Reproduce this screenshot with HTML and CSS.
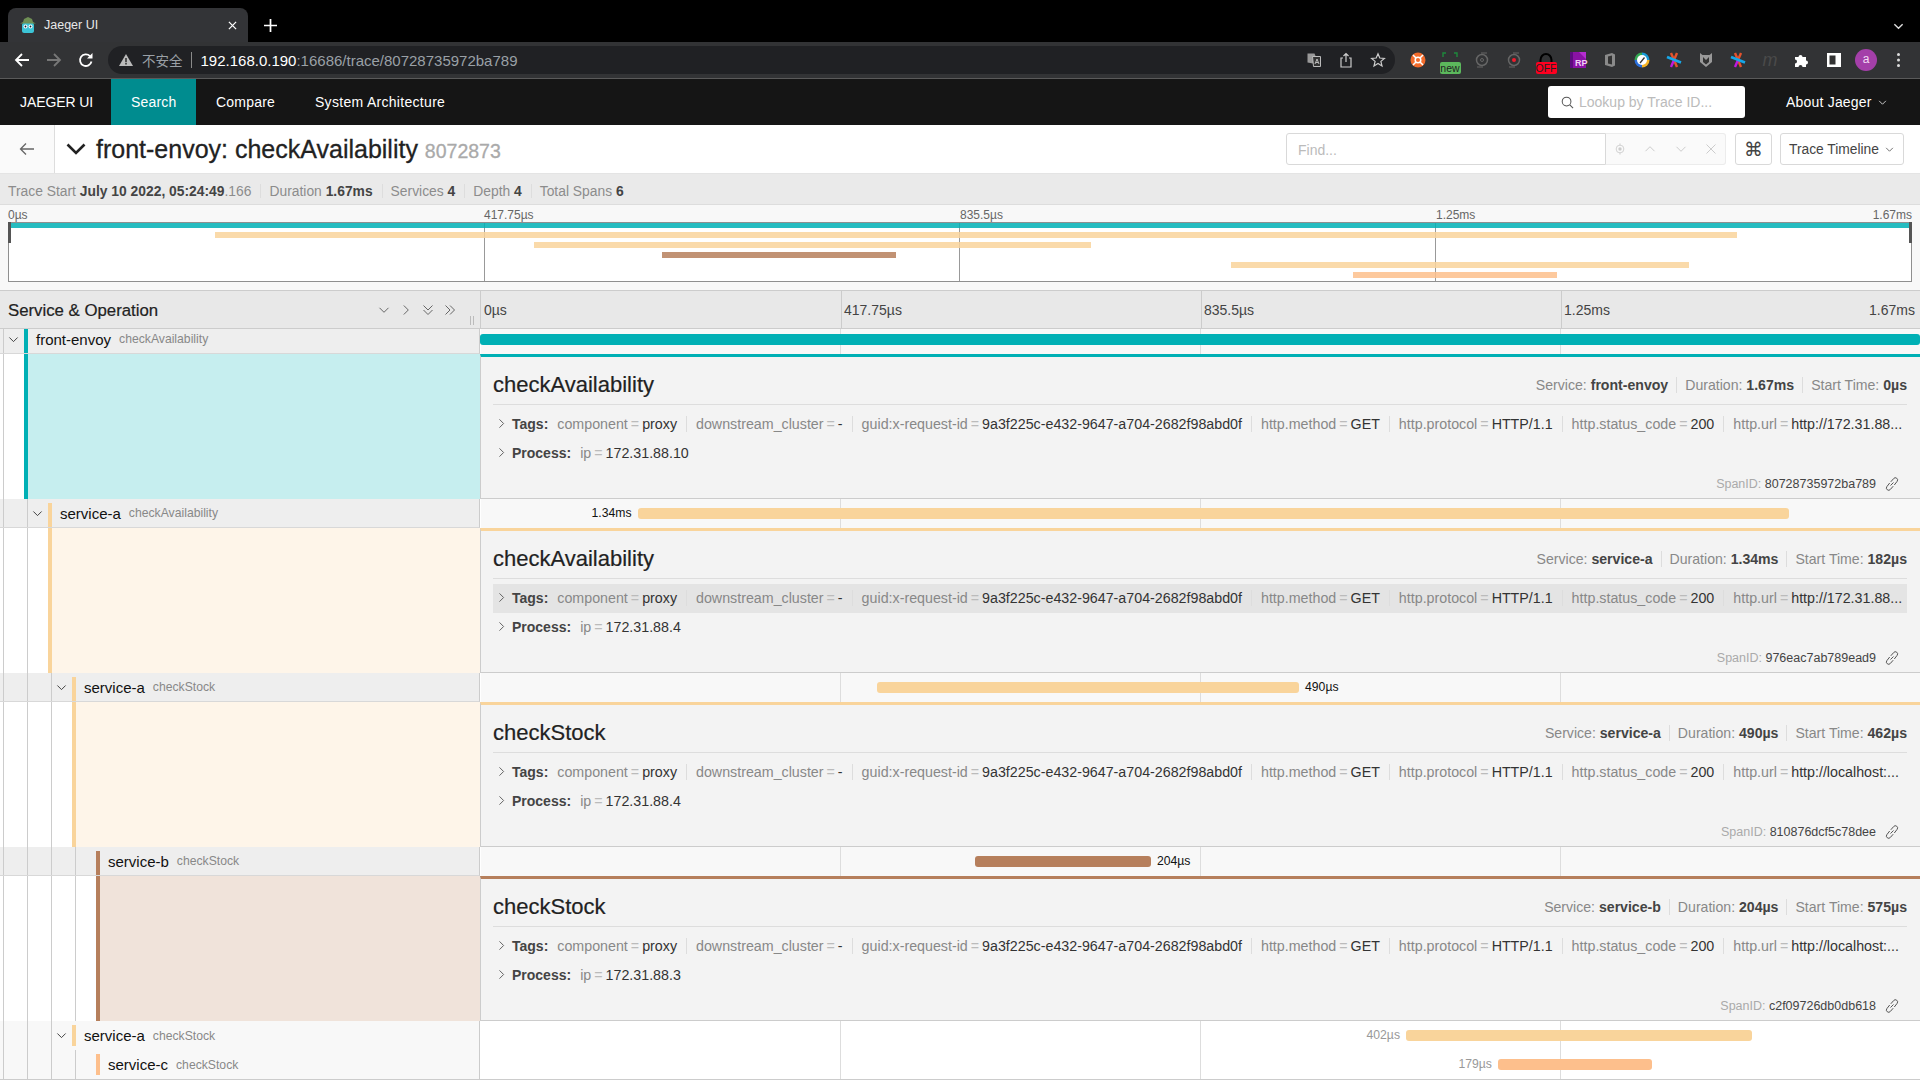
FILE: index.html
```html
<!DOCTYPE html>
<html lang="en">
<head>
    <meta charset="UTF-8">
    <title>Jaeger UI</title>
    <link rel="stylesheet" href="styles.css">
</head>
<body>
    <svg class="sprites" aria-hidden="true">
        <symbol id="i-down" viewBox="0 0 12 12"><path d="M1.5 3.8 6 8.3l4.500-4.500" fill="none" stroke="currentColor" stroke-width="1"/></symbol>
        <symbol id="i-right" viewBox="0 0 12 12"><path d="M3.800 1.500 8.300 6l-4.500 4.500" fill="none" stroke="currentColor" stroke-width="1"/></symbol>
        <symbol id="i-up" viewBox="0 0 12 12"><path d="M1.500 8.200 6 3.700l4.500 4.500" fill="none" stroke="currentColor" stroke-width="1"/></symbol>
        <symbol id="i-link" viewBox="0 0 16 16"><path d="M6.500 9.500 9.500 6.500M6.800 5.800 9.600 2.600a2.200 2.200 0 0 1 3.500 2.800L10.300 9M9.200 10.200 6.400 13.400a2.200 2.200 0 0 1-3.500-2.800L5.700 7" fill="none" stroke="currentColor" stroke-width="1"/></symbol>
        <symbol id="i-asterisk" viewBox="0 0 16 16"><path d="M5 1l3 7M11 1 8 8" fill="none" stroke="#e5532d" stroke-width="2.400"/><path d="M8 8l3 7" fill="none" stroke="#e5532d" stroke-width="2.400"/><path d="M8 8l-3 7" fill="none" stroke="#c019e0" stroke-width="2.400"/><path d="M1 5l14 5.500" stroke="#17a7e8" stroke-width="2.800"/></symbol>
    </svg>

    <div class="tabstrip">
        <div class="tab">
            <svg class="favicon" viewBox="0 0 16 16">
                <path d="M2 8c0-2 2-3 6-3s6 1 6 3v6c0 1-1 2-2 2H4c-1 0-2-1-2-2z" fill="#3cc4d6"/>
                <path d="M0 6.500 3 5l1-3 4-2 4 2 1 3 3 1.500z" fill="#6f8f55"/>
                <circle cx="5.500" cy="9.500" r="2" fill="#fff"/><circle cx="10.500" cy="9.500" r="2" fill="#fff"/>
                <circle cx="5.500" cy="9.500" r=".9" fill="#123"/><circle cx="10.500" cy="9.500" r=".9" fill="#123"/>
            </svg>
            <span class="tab-title">Jaeger UI</span>
            <svg class="tab-close" viewBox="0 0 10 10"><path d="M1 1l8 8M9 1 1 9" stroke="#fff" stroke-width="1.400"/></svg>
        </div>
        <svg class="tab-new" viewBox="0 0 12 12"><path d="M6 0v12M0 6h12" stroke="#fff" stroke-width="1.600"/></svg>
        <svg class="tab-menu" viewBox="0 0 12 12"><path d="M1.500 3.500 6 8l4.500-4.500" fill="none" stroke="#ddd" stroke-width="1.500"/></svg>
    </div>

    <div class="toolbar">
        <div class="tool-btn"><svg viewBox="0 0 16 16"><path d="M15 8H2M8 2 2 8l6 6" fill="none" stroke="#fff" stroke-width="1.800"/></svg></div>
        <div class="tool-btn"><svg viewBox="0 0 16 16"><path d="M1 8h13M8 2l6 6-6 6" fill="none" stroke="#777" stroke-width="1.800"/></svg></div>
        <div class="tool-btn"><svg viewBox="0 0 16 16"><path d="M13.500 9.500A5.800 5.800 0 1 1 12 4.100" fill="none" stroke="#fff" stroke-width="1.800"/><path d="M14.500 1v5.500H9z" fill="#fff"/></svg></div>
        <div class="omnibox">
            <svg class="omni-warn" viewBox="0 0 14 14"><path d="M7 1 14 13H0z" fill="#bbb"/><path d="M6.300 5h1.400v4.300H6.300zM6.300 10h1.400v1.400H6.300z" fill="#222"/></svg>
            <span class="omni-unsafe">不安全</span>
            <span class="omni-url"><b>192.168.0.190</b>:16686/trace/80728735972ba789</span>
            <div class="omni-actions">
                <svg viewBox="0 0 16 16"><path d="M1.500 1.500h7l1 2.500v8l-8-1.500z" fill="#999"/><path d="M6.500 4.500h8v10h-7z" fill="#333" stroke="#bbb"/><path d="M9 12l2-5 2 5M9.800 10.500h2.400" fill="none" stroke="#bbb"/></svg>
                <svg viewBox="0 0 16 16"><path d="M5 6H3v9h10V6h-2M8 10V1.500M5.500 4 8 1.500 10.500 4" fill="none" stroke="#ccc" stroke-width="1.200"/></svg>
                <svg viewBox="0 0 16 16"><path d="M8 1.800 9.800 6l4.600.4-3.500 3 1.100 4.500L8 11.500l-4 2.400 1.100-4.500-3.500-3L6.200 6z" fill="none" stroke="#ccc" stroke-width="1.200"/></svg>
            </div>
        </div>
        <div class="extensions">
            <div class="ext"><svg viewBox="0 0 16 16"><circle cx="8" cy="8" r="7.500" fill="#f26b2b"/><circle cx="8" cy="8" r="2.800" fill="none" stroke="#fff" stroke-width="1.500"/><path d="M3 3l3 3M13 3l-3 3M3 13l3-3M13 13l-3-3" stroke="#fff" stroke-width="1.500"/></svg></div>
            <div class="ext ext-badge">
                <svg class="mark-new" viewBox="0 0 16 5"><path d="M1 5V1h3M15 5V1h-3" fill="none" stroke="#1e8a3c" stroke-width="1.400"/></svg>
                <span class="badge badge-new">new</span>
            </div>
            <div class="ext"><svg viewBox="0 0 16 16"><circle cx="8" cy="8" r="5.500" fill="none" stroke="#666" stroke-width="1.500"/><circle cx="8" cy="8" r="1.500" fill="none" stroke="#666"/><path d="M3 15h6M7 1h6" stroke="#666"/></svg></div>
            <div class="ext"><svg viewBox="0 0 16 16"><circle cx="8" cy="8" r="5.500" fill="none" stroke="#666" stroke-width="1.500"/><circle cx="8" cy="8" r="2" fill="#f01c2c"/><path d="M3 15h6M7 1h6" stroke="#666"/></svg></div>
            <div class="ext ext-badge">
                <svg class="mark-off" viewBox="0 0 16 9"><path d="M2.500 9V7a5.500 6 0 0 1 11 0v2" fill="none" stroke="#000" stroke-width="2"/></svg>
                <span class="badge badge-off">OFF</span>
            </div>
            <div class="ext"><svg viewBox="0 0 16 16"><path d="M0 0h16v16H0z" fill="#8a12a5"/><path d="M4 0h5l7 7V0z" fill="#b52dd0"/><path d="M0 0h3v16H0z" fill="#5d0c80"/></svg><span class="ext-rp">RP</span></div>
            <div class="ext"><svg viewBox="0 0 16 16"><path d="M3 3 10 1l3 1.500v11L10 15l-7-2z" fill="#8a8a8a"/><path d="M6 4.500 10 3.500v9L6 11.500z" fill="#333"/></svg></div>
            <div class="ext"><svg viewBox="0 0 16 16"><path d="M8 .5A7.500 7.500 0 0 0 .5 8H8z" fill="#34a853"/><path d="M8 .5A7.500 7.500 0 0 1 15.500 8H8z" fill="#1a9ad6"/><path d="M15.500 8A7.500 7.500 0 0 1 8 15.500V8z" fill="#f6b324"/><path d="M.5 8A7.500 7.500 0 0 0 8 15.500V8z" fill="#2a6fdb"/><circle cx="8" cy="8" r="5" fill="#fff"/><path d="M5.500 10.500 10 5l1 1-4.500 5.500z" fill="#333"/></svg></div>
            <div class="ext"><svg><use href="#i-asterisk"/></svg></div>
            <div class="ext"><svg viewBox="0 0 16 16"><path d="M2 1l2.500 2h7L14 1v9l-6 5-6-5z" fill="#999"/><path d="M5 5l3 3 3-3v5l-3 2.500L5 10z" fill="#333"/></svg></div>
            <div class="ext"><svg><use href="#i-asterisk"/></svg></div>
            <div class="ext"><span class="ext-m">m</span></div>
            <div class="ext"><svg viewBox="0 0 16 16"><path d="M1 5h3.500a2 2 0 1 1 4 0H12v3.500a2 2 0 1 1 0 4V15H8.500a2 2 0 1 0-4 0H1v-3.500a2 2 0 1 0 0-4z" fill="#fff"/></svg></div>
            <div class="ext"><svg viewBox="0 0 16 16"><path d="M1 1h14v14H1z" fill="#fff"/><path d="M3.500 3.500h6v9h-6z" fill="#333"/></svg></div>
            <div class="ext"><span class="avatar">a</span></div>
            <div class="ext"><svg viewBox="0 0 4 16"><circle cx="2" cy="2.500" r="1.500" fill="#ddd"/><circle cx="2" cy="8" r="1.500" fill="#ddd"/><circle cx="2" cy="13.500" r="1.500" fill="#ddd"/></svg></div>
        </div>
    </div>

    <nav class="topnav">
        <a class="nav-item">JAEGER UI</a>
        <a class="nav-item active">Search</a>
        <a class="nav-item">Compare</a>
        <a class="nav-item">System Architecture</a>
        <div class="lookup">
            <svg viewBox="0 0 14 14"><circle cx="6" cy="6" r="4.700" fill="none" stroke="#555" stroke-width="1.100"/><path d="M9.500 9.500 13 13" stroke="#555" stroke-width="1.100"/></svg>
            <span>Lookup by Trace ID...</span>
        </div>
        <div class="about">About Jaeger <svg class="caret"><use href="#i-down"/></svg></div>
    </nav>

    <header class="trace-head">
        <div class="back"><svg viewBox="0 0 16 16"><path d="M15 8H1.500M7 2.500 1.500 8 7 13.500" fill="none" stroke="#666" stroke-width="1.300"/></svg></div>
        <svg class="title-chevron" viewBox="0 0 20 12"><path d="M1.500 1.500 10 10l8.500-8.500" fill="none" stroke="#222" stroke-width="2.600"/></svg>
        <h1 class="trace-title">front-envoy: checkAvailability <small>8072873</small></h1>
        <div class="find">
            <div class="find-input">Find...</div>
            <div class="find-actions">
                <svg viewBox="0 0 14 14"><circle cx="7" cy="7" r="4.500" fill="none" stroke="#ccc"/><circle cx="7" cy="7" r="2" fill="#ccc"/><path d="M7 .5v2M7 11.500v2" stroke="#ccc"/></svg>
                <svg viewBox="0 0 12 12"><use href="#i-up"/></svg>
                <svg viewBox="0 0 12 12"><use href="#i-down"/></svg>
                <svg viewBox="0 0 12 12"><path d="M1.500 1.500l9 9M10.500 1.500l-9 9" stroke="currentColor"/></svg>
            </div>
        </div>
        <div class="head-btn kbd">⌘</div>
        <div class="head-btn view-btn">Trace Timeline <svg class="caret"><use href="#i-down"/></svg></div>
    </header>

    <div class="summary">
        <span class="sum-item">Trace Start <b>July 10 2022, 05:24:49</b>.166</span>
        <span class="sum-item">Duration <b>1.67ms</b></span>
        <span class="sum-item">Services <b>4</b></span>
        <span class="sum-item">Depth <b>4</b></span>
        <span class="sum-item">Total Spans <b>6</b></span>
    </div>

    <section class="minimap">
        <div class="mini-ticks">
            <span>0µs</span>
            <span>417.75µs</span>
            <span>835.5µs</span>
            <span class="mini-last"><span>1.25ms</span><span>1.67ms</span></span>
        </div>
        <div class="mini-box">
            <div class="mini-bar c-teal" style="margin-left:0;width:100%"></div>
            <div class="mini-bar c-tan" style="margin-left:10.82%;width:80.03%"></div>
            <div class="mini-bar c-tan" style="margin-left:27.59%;width:29.32%"></div>
            <div class="mini-bar c-brown" style="margin-left:34.31%;width:12.3%"></div>
            <div class="mini-bar c-tan" style="margin-left:64.27%;width:24.07%"></div>
            <div class="mini-bar c-peach" style="margin-left:70.65%;width:10.75%"></div>
        </div>
    </section>

    <section class="timeline">
        <div class="tl-head">
            <div class="tl-head-name">
                <span class="tl-title">Service &amp; Operation</span>
                <div class="tl-tools">
                    <svg><use href="#i-down"/></svg>
                    <svg><use href="#i-right"/></svg>
                    <svg viewBox="0 0 12 12"><path d="M1.500 1.500 6 6l4.500-4.500M1.500 6 6 10.500 10.500 6" fill="none" stroke="currentColor"/></svg>
                    <svg viewBox="0 0 12 12"><path d="M1.500 1.500 6 6l-4.500 4.500M6 1.500 10.500 6 6 10.500" fill="none" stroke="currentColor"/></svg>
                </div>
                <span class="grip"></span>
            </div>
            <div class="tl-head-ticks">
                <span>0µs</span>
                <span>417.75µs</span>
                <span>835.5µs</span>
                <span class="tl-last"><span>1.25ms</span><span>1.67ms</span></span>
            </div>
        </div>

        <!-- front-envoy -->
        <div class="row row-first selected">
            <div class="row-name">
                <span class="guide"><svg class="toggle"><use href="#i-down"/></svg></span>
                <span class="svc-mark open c-teal"></span>
                <span class="svc">front-envoy</span><span class="op">checkAvailability</span>
            </div>
            <div class="row-track"><span class="bar c-teal" style="left:-0.07%;width:100.07%"></span></div>
        </div>
        <div class="detail">
            <div class="detail-name">
                <span class="guide"></span>
                <span class="detail-tint tint-teal"></span>
            </div>
            <div class="detail-body line-teal">
                <div class="detail-top">
                    <h2>checkAvailability</h2>
                    <div class="overview">
                        <span>Service: <b>front-envoy</b></span>
                        <span>Duration: <b>1.67ms</b></span>
                        <span>Start Time: <b>0µs</b></span>
                    </div>
                </div>
                <div class="kv-row">
                    <svg class="kv-toggle"><use href="#i-right"/></svg>
                    <b class="kv-label">Tags:</b>
                    <span class="kv"><i>component</i><em>=</em>proxy</span>
                    <span class="kv"><i>downstream_cluster</i><em>=</em>-</span>
                    <span class="kv"><i>guid:x-request-id</i><em>=</em>9a3f225c-e432-9647-a704-2682f98abd0f</span>
                    <span class="kv"><i>http.method</i><em>=</em>GET</span>
                    <span class="kv"><i>http.protocol</i><em>=</em>HTTP/1.1</span>
                    <span class="kv"><i>http.status_code</i><em>=</em>200</span>
                    <span class="kv"><i>http.url</i><em>=</em>http://172.31.88...</span>
                </div>
                <div class="kv-row">
                    <svg class="kv-toggle"><use href="#i-right"/></svg>
                    <b class="kv-label">Process:</b>
                    <span class="kv"><i>ip</i><em>=</em>172.31.88.10</span>
                </div>
                <div class="span-id">SpanID: <span>80728735972ba789</span><svg><use href="#i-link"/></svg></div>
            </div>
        </div>

        <!-- service-a checkAvailability -->
        <div class="row selected">
            <div class="row-name">
                <span class="guide"></span>
                <span class="guide"><svg class="toggle"><use href="#i-down"/></svg></span>
                <span class="svc-mark open c-tan"></span>
                <span class="svc">service-a</span><span class="op">checkAvailability</span>
            </div>
            <div class="row-track"><span class="bar c-tan" style="left:10.88%;width:80.02%"><span class="bar-label left">1.34ms</span></span></div>
        </div>
        <div class="detail">
            <div class="detail-name">
                <span class="guide"></span><span class="guide"></span>
                <span class="detail-tint tint-tan"></span>
            </div>
            <div class="detail-body line-tan">
                <div class="detail-top">
                    <h2>checkAvailability</h2>
                    <div class="overview">
                        <span>Service: <b>service-a</b></span>
                        <span>Duration: <b>1.34ms</b></span>
                        <span>Start Time: <b>182µs</b></span>
                    </div>
                </div>
                <div class="kv-row hovered">
                    <svg class="kv-toggle"><use href="#i-right"/></svg>
                    <b class="kv-label">Tags:</b>
                    <span class="kv"><i>component</i><em>=</em>proxy</span>
                    <span class="kv"><i>downstream_cluster</i><em>=</em>-</span>
                    <span class="kv"><i>guid:x-request-id</i><em>=</em>9a3f225c-e432-9647-a704-2682f98abd0f</span>
                    <span class="kv"><i>http.method</i><em>=</em>GET</span>
                    <span class="kv"><i>http.protocol</i><em>=</em>HTTP/1.1</span>
                    <span class="kv"><i>http.status_code</i><em>=</em>200</span>
                    <span class="kv"><i>http.url</i><em>=</em>http://172.31.88...</span>
                </div>
                <div class="kv-row">
                    <svg class="kv-toggle"><use href="#i-right"/></svg>
                    <b class="kv-label">Process:</b>
                    <span class="kv"><i>ip</i><em>=</em>172.31.88.4</span>
                </div>
                <div class="span-id">SpanID: <span>976eac7ab789ead9</span><svg><use href="#i-link"/></svg></div>
            </div>
        </div>

        <!-- service-a checkStock -->
        <div class="row selected">
            <div class="row-name">
                <span class="guide"></span>
                <span class="guide"></span>
                <span class="guide"><svg class="toggle"><use href="#i-down"/></svg></span>
                <span class="svc-mark open c-tan"></span>
                <span class="svc">service-a</span><span class="op">checkStock</span>
            </div>
            <div class="row-track"><span class="bar c-tan" style="left:27.52%;width:29.33%"><span class="bar-label right">490µs</span></span></div>
        </div>
        <div class="detail">
            <div class="detail-name">
                <span class="guide"></span><span class="guide"></span><span class="guide"></span>
                <span class="detail-tint tint-tan"></span>
            </div>
            <div class="detail-body line-tan">
                <div class="detail-top">
                    <h2>checkStock</h2>
                    <div class="overview">
                        <span>Service: <b>service-a</b></span>
                        <span>Duration: <b>490µs</b></span>
                        <span>Start Time: <b>462µs</b></span>
                    </div>
                </div>
                <div class="kv-row">
                    <svg class="kv-toggle"><use href="#i-right"/></svg>
                    <b class="kv-label">Tags:</b>
                    <span class="kv"><i>component</i><em>=</em>proxy</span>
                    <span class="kv"><i>downstream_cluster</i><em>=</em>-</span>
                    <span class="kv"><i>guid:x-request-id</i><em>=</em>9a3f225c-e432-9647-a704-2682f98abd0f</span>
                    <span class="kv"><i>http.method</i><em>=</em>GET</span>
                    <span class="kv"><i>http.protocol</i><em>=</em>HTTP/1.1</span>
                    <span class="kv"><i>http.status_code</i><em>=</em>200</span>
                    <span class="kv"><i>http.url</i><em>=</em>http://localhost:...</span>
                </div>
                <div class="kv-row">
                    <svg class="kv-toggle"><use href="#i-right"/></svg>
                    <b class="kv-label">Process:</b>
                    <span class="kv"><i>ip</i><em>=</em>172.31.88.4</span>
                </div>
                <div class="span-id">SpanID: <span>810876dcf5c78dee</span><svg><use href="#i-link"/></svg></div>
            </div>
        </div>

        <!-- service-b checkStock -->
        <div class="row selected">
            <div class="row-name">
                <span class="guide"></span><span class="guide"></span><span class="guide"></span><span class="guide"></span>
                <span class="svc-mark open c-brown"></span>
                <span class="svc">service-b</span><span class="op">checkStock</span>
            </div>
            <div class="row-track"><span class="bar c-brown" style="left:34.33%;width:12.23%"><span class="bar-label right">204µs</span></span></div>
        </div>
        <div class="detail">
            <div class="detail-name">
                <span class="guide"></span><span class="guide"></span><span class="guide"></span><span class="guide"></span>
                <span class="detail-tint tint-brown"></span>
            </div>
            <div class="detail-body line-brown">
                <div class="detail-top">
                    <h2>checkStock</h2>
                    <div class="overview">
                        <span>Service: <b>service-b</b></span>
                        <span>Duration: <b>204µs</b></span>
                        <span>Start Time: <b>575µs</b></span>
                    </div>
                </div>
                <div class="kv-row">
                    <svg class="kv-toggle"><use href="#i-right"/></svg>
                    <b class="kv-label">Tags:</b>
                    <span class="kv"><i>component</i><em>=</em>proxy</span>
                    <span class="kv"><i>downstream_cluster</i><em>=</em>-</span>
                    <span class="kv"><i>guid:x-request-id</i><em>=</em>9a3f225c-e432-9647-a704-2682f98abd0f</span>
                    <span class="kv"><i>http.method</i><em>=</em>GET</span>
                    <span class="kv"><i>http.protocol</i><em>=</em>HTTP/1.1</span>
                    <span class="kv"><i>http.status_code</i><em>=</em>200</span>
                    <span class="kv"><i>http.url</i><em>=</em>http://localhost:...</span>
                </div>
                <div class="kv-row">
                    <svg class="kv-toggle"><use href="#i-right"/></svg>
                    <b class="kv-label">Process:</b>
                    <span class="kv"><i>ip</i><em>=</em>172.31.88.3</span>
                </div>
                <div class="span-id">SpanID: <span>c2f09726db0db618</span><svg><use href="#i-link"/></svg></div>
            </div>
        </div>

        <!-- collapsed spans -->
        <div class="row plain">
            <div class="row-name">
                <span class="guide"></span>
                <span class="guide"></span>
                <span class="guide"><svg class="toggle"><use href="#i-down"/></svg></span>
                <span class="svc-mark c-tan"></span>
                <span class="svc">service-a</span><span class="op">checkStock</span>
            </div>
            <div class="row-track"><span class="bar c-tan" style="left:64.28%;width:24.07%"><span class="bar-label left muted">402µs</span></span></div>
        </div>
        <div class="row plain">
            <div class="row-name">
                <span class="guide"></span><span class="guide"></span><span class="guide"></span><span class="guide"></span>
                <span class="svc-mark c-peach"></span>
                <span class="svc">service-c</span><span class="op">checkStock</span>
            </div>
            <div class="row-track"><span class="bar c-peach" style="left:70.67%;width:10.7%"><span class="bar-label left muted">179µs</span></span></div>
        </div>
    </section>
</body>
</html>
```

FILE: styles.css
```css
* {
    box-sizing: border-box;
}

body {
    margin: 0;
    width: 1920px;
    height: 1080px;
    overflow: hidden;
    background: #fff;
    color: #333;
    font-family: "Liberation Sans", Arial, sans-serif;
    font-size: 14px;
}

.sprites {
    display: none;
}

/* browser chrome */
.tabstrip {
    height: 42px;
    background: #000;
    display: flex;
    align-items: flex-end;
    padding-left: 8px;
    position: relative;
}

.tab {
    width: 240px;
    height: 34px;
    background: #333437;
    border-radius: 8px 8px 0 0;
    display: flex;
    align-items: center;
    padding-left: 12px;
    padding-right: 11px;
    color: #e8e8e8;
    font-size: 12.500px;
}

.favicon {
    width: 16px;
    height: 16px;
    margin-right: 8px;
    flex: none;
}

.tab-title {
    flex: 1;
}

.tab-close {
    width: 9px;
    height: 9px;
}

.tab-new {
    width: 13px;
    height: 13px;
    margin: 0 0 10px 16px;
}

.tab-menu {
    width: 11px;
    height: 11px;
    margin: 0 16px 10px auto;
}

.toolbar {
    height: 37px;
    background: #323335;
    border-bottom: 1px solid #5a5a5a;
    display: flex;
    align-items: center;
    padding: 0 6px;
}

.tool-btn {
    width: 32px;
    display: flex;
    justify-content: center;
}

.tool-btn svg {
    width: 16px;
    height: 16px;
}

.omnibox {
    width: 1287px;
    height: 28px;
    margin-left: 6px;
    border-radius: 14px;
    background: #202124;
    display: flex;
    align-items: center;
    padding-left: 11px;
    padding-right: 9px;
    color: #9aa0a6;
    font-size: 15px;
}

.omni-warn {
    width: 14px;
    height: 14px;
}

.omni-unsafe {
    margin-left: 9px;
    padding-right: 8px;
    margin-right: 9px;
    border-right: 1px solid #8a8a8a;
    font-family: "Noto Sans CJK SC", sans-serif;
    font-size: 13.500px;
    line-height: 16px;
}

.omni-url b {
    color: #fff;
    font-weight: 400;
}

.omni-actions {
    margin-left: auto;
    display: flex;
    gap: 16px;
}

.omni-actions svg {
    width: 16px;
    height: 16px;
}

.extensions {
    display: flex;
    margin-left: 7px;
}

.ext {
    width: 32px;
    height: 28px;
    display: flex;
    align-items: center;
    justify-content: center;
    position: relative;
}

.ext svg {
    width: 16px;
    height: 16px;
}

.ext-badge {
    flex-direction: column;
    justify-content: flex-end;
}

.ext svg.mark-new {
    height: 5px;
    margin-bottom: 5px;
}

.ext svg.mark-off {
    height: 9px;
}

.badge {
    width: 21px;
    height: 12px;
    border-radius: 2px;
    color: #222;
    font-size: 10.500px;
    line-height: 12px;
    text-align: center;
}

.badge-new {
    background: #5cb85c;
}

.badge-off {
    background: #ff0020;
}

.ext-rp {
    position: absolute;
    left: 13px;
    top: 12px;
    color: #f0d0f5;
    font-size: 9px;
    font-weight: 700;
}

.ext-m {
    color: #4a4a4a;
    font-size: 18px;
    font-style: italic;
}

.avatar {
    width: 22px;
    height: 22px;
    border-radius: 50%;
    background: #a43fa9;
    color: #f3dcf4;
    font-size: 12px;
    line-height: 21px;
    text-align: center;
}

.ext:last-child svg {
    width: 5px;
}

/* jaeger nav */
.topnav {
    height: 46px;
    background: #151515;
    color: #fff;
    display: flex;
    align-items: stretch;
}

.nav-item {
    padding: 0 20px;
    display: flex;
    align-items: center;
    letter-spacing: .2px;
}

.nav-item:first-child {
    width: 111px;
    white-space: nowrap;
    letter-spacing: -.1px;
}

.nav-item.active {
    width: 85px;
    background: #008c8f;
}

.nav-item:nth-child(4) {
    letter-spacing: .3px;
}

.lookup {
    width: 197px;
    height: 32px;
    margin: 7px 0 0 auto;
    background: #fff;
    border-radius: 3px;
    color: #bbb;
    display: flex;
    align-items: center;
    padding-left: 13px;
}

.lookup svg {
    width: 13px;
    height: 13px;
    margin-right: 5px;
}

.about {
    width: 175px;
    padding-left: 41px;
    display: flex;
    align-items: center;
    letter-spacing: .2px;
}

.caret {
    width: 9px;
    height: 9px;
    margin-left: 6px;
}

/* trace header */
.trace-head {
    height: 49px;
    display: flex;
    align-items: center;
    border-bottom: 1px solid #e4e4e4;
}

.back {
    width: 55px;
    height: 100%;
    background: #fafafa;
    border-right: 1px solid #ddd;
    display: flex;
    align-items: center;
    justify-content: center;
}

.back svg {
    width: 16px;
    height: 16px;
}

.title-chevron {
    width: 20px;
    height: 12px;
    margin-left: 11px;
    margin-right: 10px;
}

.trace-title {
    margin: 0;
    flex: 1;
    color: #222;
    font-size: 25px;
    font-weight: 400;
    -webkit-text-stroke: .3px #222;
}

.trace-title small {
    margin-left: 0;
    color: #aaa;
    font-size: 19.500px;
    -webkit-text-stroke: .3px #aaa;
}

.find {
    width: 440px;
    height: 32px;
    display: flex;
    margin-right: 9px;
}

.find-input {
    width: 320px;
    border: 1px solid #d9d9d9;
    border-radius: 3px 0 0 3px;
    color: #bbb;
    line-height: 32px;
    padding-left: 11px;
}

.find-actions {
    flex: 1;
    background: #fafafa;
    border: 1px solid #ececec;
    border-left: 0;
    border-radius: 0 3px 3px 0;
    color: #ccc;
    display: flex;
    align-items: center;
    justify-content: space-between;
    padding: 0 8px;
}

.find-actions svg {
    width: 12px;
    height: 12px;
}

.head-btn {
    height: 32px;
    border: 1px solid #d9d9d9;
    border-radius: 3px;
    display: flex;
    align-items: center;
    color: #444;
}

.kbd {
    width: 37px;
    justify-content: center;
    margin-right: 8px;
    font-family: "DejaVu Sans", sans-serif;
    font-size: 19px;
}

.view-btn {
    width: 124px;
    padding-left: 8px;
    margin-right: 16px;
    white-space: nowrap;
    font-size: 13.800px;
}

.summary {
    height: 31px;
    background: #eaeaea;
    border-bottom: 1px solid #ddd;
    display: flex;
    align-items: center;
    padding: 3px 0 0 8px;
    color: #8c8c8c;
    font-size: 13.850px;
}

.sum-item {
    padding-right: 9px;
    margin-right: 8px;
    border-right: 1px solid #ddd;
    line-height: 14px;
}

.sum-item:last-child {
    border-right: 0;
}

.sum-item b {
    color: #444;
}

/* minimap */
.minimap {
    height: 85px;
    background: #f8f8f8;
    padding: 0 8px;
}

.mini-ticks {
    height: 17px;
    display: grid;
    grid-template-columns: repeat(4, 476px);
    align-items: center;
    padding-top: 2px;
    color: #666;
    font-size: 12px;
}

.mini-last {
    display: flex;
    justify-content: space-between;
}

.mini-box {
    height: 60px;
    background: #fff;
    border: 1px solid #8f8f8f;
    display: flex;
    flex-direction: column;
    gap: 4px;
    position: relative;
}

.mini-box::before {
    content: "";
    position: absolute;
    inset: 0;
    background: repeating-linear-gradient(90deg, transparent 0 474.750px, #999 474.750px 475.750px);
}

.mini-box::after {
    content: "";
    position: absolute;
    left: -1px;
    right: -1px;
    top: -1px;
    height: 21px;
    border-left: 3px solid #555;
    border-right: 3px solid #555;
}

.mini-bar {
    height: 6px;
    opacity: .85;
}

.mini-bar:first-child {
    height: 5px;
}

.c-teal {
    background: #00b0b5;
}

.c-tan {
    background: #f9d49b;
}

.c-brown {
    background: #b67f5c;
}

.c-peach {
    background: #fdbf8c;
}

/* timeline */
.timeline {
    border-top: 1px solid #ccc;
    border-bottom: 1px solid #ccc;
}

.tl-head {
    height: 38px;
    background: #e8e8e8;
    border-bottom: 1px solid #ccc;
    display: grid;
    grid-template-columns: 481px 1fr;
}

.tl-head-name {
    border-right: 1px solid #ccc;
    display: flex;
    align-items: center;
    padding: 3px 0 0 8px;
    position: relative;
}

.tl-title {
    color: #222;
    font-size: 16.800px;
    -webkit-text-stroke: .2px #222;
}

.tl-tools {
    position: absolute;
    left: 378px;
    top: 13px;
    display: flex;
    gap: 10px;
    color: #666;
}

.tl-tools svg {
    width: 12px;
    height: 12px;
}

.grip {
    position: absolute;
    left: 470px;
    top: 25px;
    width: 4px;
    height: 9px;
    border: 1px solid #bbb;
    border-width: 0 1px;
}

.tl-head-ticks {
    display: grid;
    grid-template-columns: repeat(3, 360px) 1fr;
    align-items: stretch;
    color: #444;
}

.tl-head-ticks > span {
    padding-left: 3px;
    display: flex;
    align-items: center;
}

.tl-head-ticks > span + span {
    padding-left: 2px;
    border-left: 1px solid #ccc;
}

.tl-last {
    justify-content: space-between;
    padding-right: 5px;
}

.row {
    height: 29px;
    display: grid;
    grid-template-columns: 480px 1fr;
}

.row-first {
    height: 25px;
}

.row-name {
    height: 100%;
    display: flex;
    align-items: center;
    padding-left: 3px;
    border-right: 1px solid #ccc;
    white-space: nowrap;
}

.selected .row-name {
    background: #eee;
    border-bottom: 1px solid #d8d8d8;
}

.plain .row-name {
    background: #f8f8f8;
}

.guide {
    width: 24px;
    height: 100%;
    flex: none;
    border-left: 1px solid #ccc;
    display: flex;
    align-items: center;
    justify-content: center;
    padding-right: 5px;
}

.toggle {
    width: 11px;
    height: 11px;
    color: #333;
}

.row-first .toggle,
.row-first .svc,
.row-first .op {
    margin-bottom: 4px;
}

.svc-mark {
    width: 4px;
    height: 21px;
    margin-left: -3px;
    margin-right: 8px;
    flex: none;
}

.svc-mark.open {
    height: 24px;
    align-self: flex-end;
}

.row-first .svc-mark.open {
    height: 100%;
}

.svc {
    color: #111;
    font-size: 15px;
}

.op {
    margin-left: 8px;
    color: #888;
    font-size: 12.200px;
}

.row-track {
    position: relative;
    margin-left: 1px;
    background: repeating-linear-gradient(90deg, transparent 0 359px, #ddd 359px 360px);
}

.selected .row-track {
    background-color: #f8f8f8;
}

.bar {
    position: absolute;
    top: 9px;
    height: 11px;
    border-radius: 3px;
}

.row-first .bar {
    top: 5px;
}

.bar-label {
    position: absolute;
    top: -2px;
    color: #111;
    font-size: 12.200px;
    line-height: 15px;
    white-space: nowrap;
}

.bar-label.left {
    right: 100%;
    margin-right: 6px;
}

.bar-label.right {
    left: 100%;
    margin-left: 6px;
}

.bar-label.muted {
    color: #999;
}

.detail {
    height: 145px;
    display: grid;
    grid-template-columns: 480px 1fr;
}

.detail-name {
    display: flex;
    padding-left: 3px;
}

.detail-tint {
    flex: 1;
    margin-left: -3px;
    border-left: 4px solid;
}

.tint-teal {
    background: #c6eeef;
    border-color: #00b0b5;
}

.tint-tan {
    background: #fef5e9;
    border-color: #f9d49b;
}

.tint-brown {
    background: #f0e3da;
    border-color: #b67f5c;
}

.detail-body {
    border-left: 1px solid #ccc;
    border-bottom: 1px solid #ccc;
    border-top: 3px solid;
    background: #f3f3f3;
    padding: 0 13px 0 12px;
}

.line-teal {
    border-top-color: #00b0b5;
}

.line-tan {
    border-top-color: #f9d49b;
}

.line-brown {
    border-top-color: #b67f5c;
}

.detail-top {
    height: 48px;
    padding-top: 9px;
    margin-bottom: 5px;
    border-bottom: 1px solid #ddd;
    display: flex;
    justify-content: space-between;
    align-items: center;
}

.detail-top h2 {
    margin: 0;
    color: #222;
    font-size: 22px;
    font-weight: 400;
    -webkit-text-stroke: .2px #222;
}

.overview {
    display: flex;
    color: #888;
    font-size: 14.100px;
}

.overview span {
    padding: 0 8px 0 8px;
    border-right: 1px solid #ddd;
    line-height: 16px;
}

.overview span:last-child {
    padding-right: 0;
    border-right: 0;
}

.overview b {
    color: #444;
}

.kv-row {
    height: 29px;
    display: flex;
    align-items: center;
    padding-bottom: 2px;
    white-space: nowrap;
    color: #333;
    font-size: 14.260px;
}

.kv-row.hovered {
    background: #e4e4e4;
}

.kv-toggle {
    width: 11px;
    height: 11px;
    margin-left: 3px;
    margin-right: 5px;
    color: #555;
}

.kv-label {
    margin-right: 9px;
    color: #444;
    font-size: 14px;
}

.kv {
    padding-right: 9px;
    margin-right: 9px;
    border-right: 1px solid #ddd;
    line-height: 16px;
}

.kv:last-child {
    padding-right: 0;
    margin-right: 0;
    border-right: 0;
}

.kv i {
    color: #888;
    font-style: normal;
}

.kv em {
    margin: 0 3px;
    color: #bbb;
    font-style: normal;
}

.span-id {
    height: 30px;
    display: flex;
    align-items: center;
    justify-content: flex-end;
    padding-top: 2px;
    color: #aaa;
    font-size: 12.500px;
    white-space: pre;
}

.span-id span {
    color: #444;
}

.span-id svg {
    width: 16px;
    height: 16px;
    margin-left: 8px;
    margin-right: 7px;
    color: #555;
}
```
